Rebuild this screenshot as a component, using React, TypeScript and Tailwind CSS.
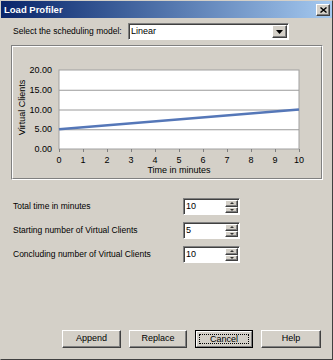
import React from 'react';

const font = { fontFamily: '"Liberation Sans", Arial, sans-serif' };

// raised / sunken win2k borders
const raised = 'border border-t-white border-l-white border-r-[#404040] border-b-[#404040] shadow-[inset_-1px_-1px_0_#808080]';
const raisedFlat = 'border border-t-white border-l-white border-r-[#808080] border-b-[#808080]';
const sunken = 'border border-t-[#808080] border-l-[#808080] border-r-white border-b-white shadow-[inset_1px_1px_0_#404040]';

function SpinBox({ value }: { value: string }) {
  return (
    <div className={`w-[57px] h-[17px] bg-white flex items-center ${sunken}`}>
      <span className="flex-1 pl-[2px] text-[9px] text-black leading-none">{value}</span>
      <div className="w-[13px] h-[13px] mr-[1px] flex flex-col">
        <div className={`flex-1 bg-[#d4d0c8] flex items-center justify-center ${raised}`}>
          <svg width="4" height="2" viewBox="0 0 4 2"><path d="M2 0 L4 2 L0 2 Z" fill="#333" /></svg>
        </div>
        <div className={`flex-1 bg-[#d4d0c8] flex items-center justify-center ${raised}`}>
          <svg width="4" height="2" viewBox="0 0 4 2"><path d="M0 0 L4 0 L2 2 Z" fill="#333" /></svg>
        </div>
      </div>
    </div>
  );
}

function Chart() {
  const x0 = 46;
  const x1 = 286;
  const y0 = 102;
  const yTop = 23;
  const yFor = (v: number) => y0 - ((y0 - yTop) * v) / 20;
  const xFor = (t: number) => x0 + ((x1 - x0) * t) / 10;
  return (
    <svg width="309" height="132" viewBox="0 0 309 132" style={font}>
      <rect x={x0} y={yTop} width={x1 - x0} height={y0 - yTop} fill="#fff" stroke="#a0a0a0" strokeWidth="1" />
      {[5, 10, 15].map((v) => (
        <line key={v} x1={x0} x2={x1} y1={yFor(v) + 0.5} y2={yFor(v) + 0.5} stroke="#9a9a9a" strokeWidth="1" />
      ))}
      {[0, 5, 10, 15, 20].map((v) => (
        <text key={v} x={x0 - 7} y={yFor(v) + 3} fontSize="9" textAnchor="end" fill="#000">
          {v.toFixed(2)}
        </text>
      ))}
      {Array.from({ length: 11 }, (_, t) => (
        <g key={t}>
          <line x1={xFor(t) + 0.5} x2={xFor(t) + 0.5} y1={y0} y2={y0 + 3} stroke="#808080" />
          <text x={xFor(t)} y={y0 + 14} fontSize="9" textAnchor="middle" fill="#000">
            {t}
          </text>
        </g>
      ))}
      <line x1={x0} y1={yFor(5)} x2={x1} y2={yFor(10)} stroke="#5577b8" strokeWidth="2.5" />
      <text x={(x0 + x1) / 2} y={y0 + 24} fontSize="9" textAnchor="middle" fill="#000">
        Time in minutes
      </text>
      <text
        x={0}
        y={0}
        fontSize="9"
        textAnchor="middle"
        fill="#000"
        transform={`translate(12 ${(y0 + yTop) / 2 - 2}) rotate(-90)`}
      >
        Virtual Clients
      </text>
    </svg>
  );
}

export default function App() {
  const fields = [
    { label: 'Total time in minutes', value: '10' },
    { label: 'Starting number of Virtual Clients', value: '5' },
    { label: 'Concluding number of Virtual Clients', value: '10' },
  ];

  return (
    <div
      className="w-[333px] h-[360px] bg-[#d4d0c8] flex flex-col border border-t-[#d4d0c8] border-l-[#d4d0c8] border-r-[#404040] border-b-[#404040] text-black"
      style={font}
    >
      {/* Title bar */}
      <div className="h-[17px] flex items-center justify-between bg-gradient-to-r from-[#0a246a] to-[#a6caf0]">
        <span className="pl-[3px] text-[9.5px] font-bold text-white leading-none">Load Profiler</span>
        <div className={`w-[14px] h-[12px] mr-[2px] bg-[#d4d0c8] flex items-center justify-center ${raised}`}>
          <svg width="7" height="6" viewBox="0 0 7 6">
            <path d="M0.5 0.5 L6.5 5.5 M6.5 0.5 L0.5 5.5" stroke="#000" strokeWidth="1.4" />
          </svg>
        </div>
      </div>

      <div className="flex-1 flex flex-col pl-[10px] pr-[11px] pt-[5px] pb-[11px] text-[8.5px]">
        {/* Scheduling model */}
        <div className="flex items-center h-[17px]">
          <span className="w-[117px] pl-[2px]">Select the scheduling model:</span>
          <div className={`w-[161px] h-[17px] bg-white flex items-center ${sunken}`}>
            <span className="flex-1 pl-[2px] text-[9px]">Linear</span>
            <div className={`w-[15px] h-[13px] mr-[1px] bg-[#d4d0c8] flex items-center justify-center ${raised}`}>
              <svg width="7" height="4" viewBox="0 0 7 4"><path d="M0 0 L7 0 L3.5 4 Z" fill="#000" /></svg>
            </div>
          </div>
        </div>

        {/* Chart panel */}
        <div className="mt-[5px] w-[312px] h-[135px] border border-t-[#808080] border-l-[#808080] border-r-white border-b-white">
          <div className="w-full h-full border border-t-white border-l-white border-r-[#808080] border-b-[#808080]">
            <Chart />
          </div>
        </div>

        {/* Fields */}
        <div className="mt-[18px] flex flex-col gap-[7px]">
          {fields.map((f) => (
            <div key={f.label} className="flex items-center h-[17px]">
              <span className="w-[172px] pl-[2px]">{f.label}</span>
              <SpinBox value={f.value} />
            </div>
          ))}
        </div>

        <div className="flex-1" />

        {/* Buttons */}
        <div className="flex justify-end gap-[8px] text-[9px]">
          <button className={`w-[59px] h-[18px] bg-[#d4d0c8] ${raised}`}>Append</button>
          <button className={`w-[58px] h-[18px] bg-[#d4d0c8] ${raised}`}>Replace</button>
          <button className="w-[58px] h-[18px] bg-[#d4d0c8] border border-black p-0">
            <div className={`w-full h-full p-[2px] ${raisedFlat}`}>
              <div className="w-full h-full flex items-center justify-center border border-dotted border-black leading-none">
                Cancel
              </div>
            </div>
          </button>
          <button className={`w-[60px] h-[18px] bg-[#d4d0c8] ${raised}`}>Help</button>
        </div>
      </div>
    </div>
  );
}
